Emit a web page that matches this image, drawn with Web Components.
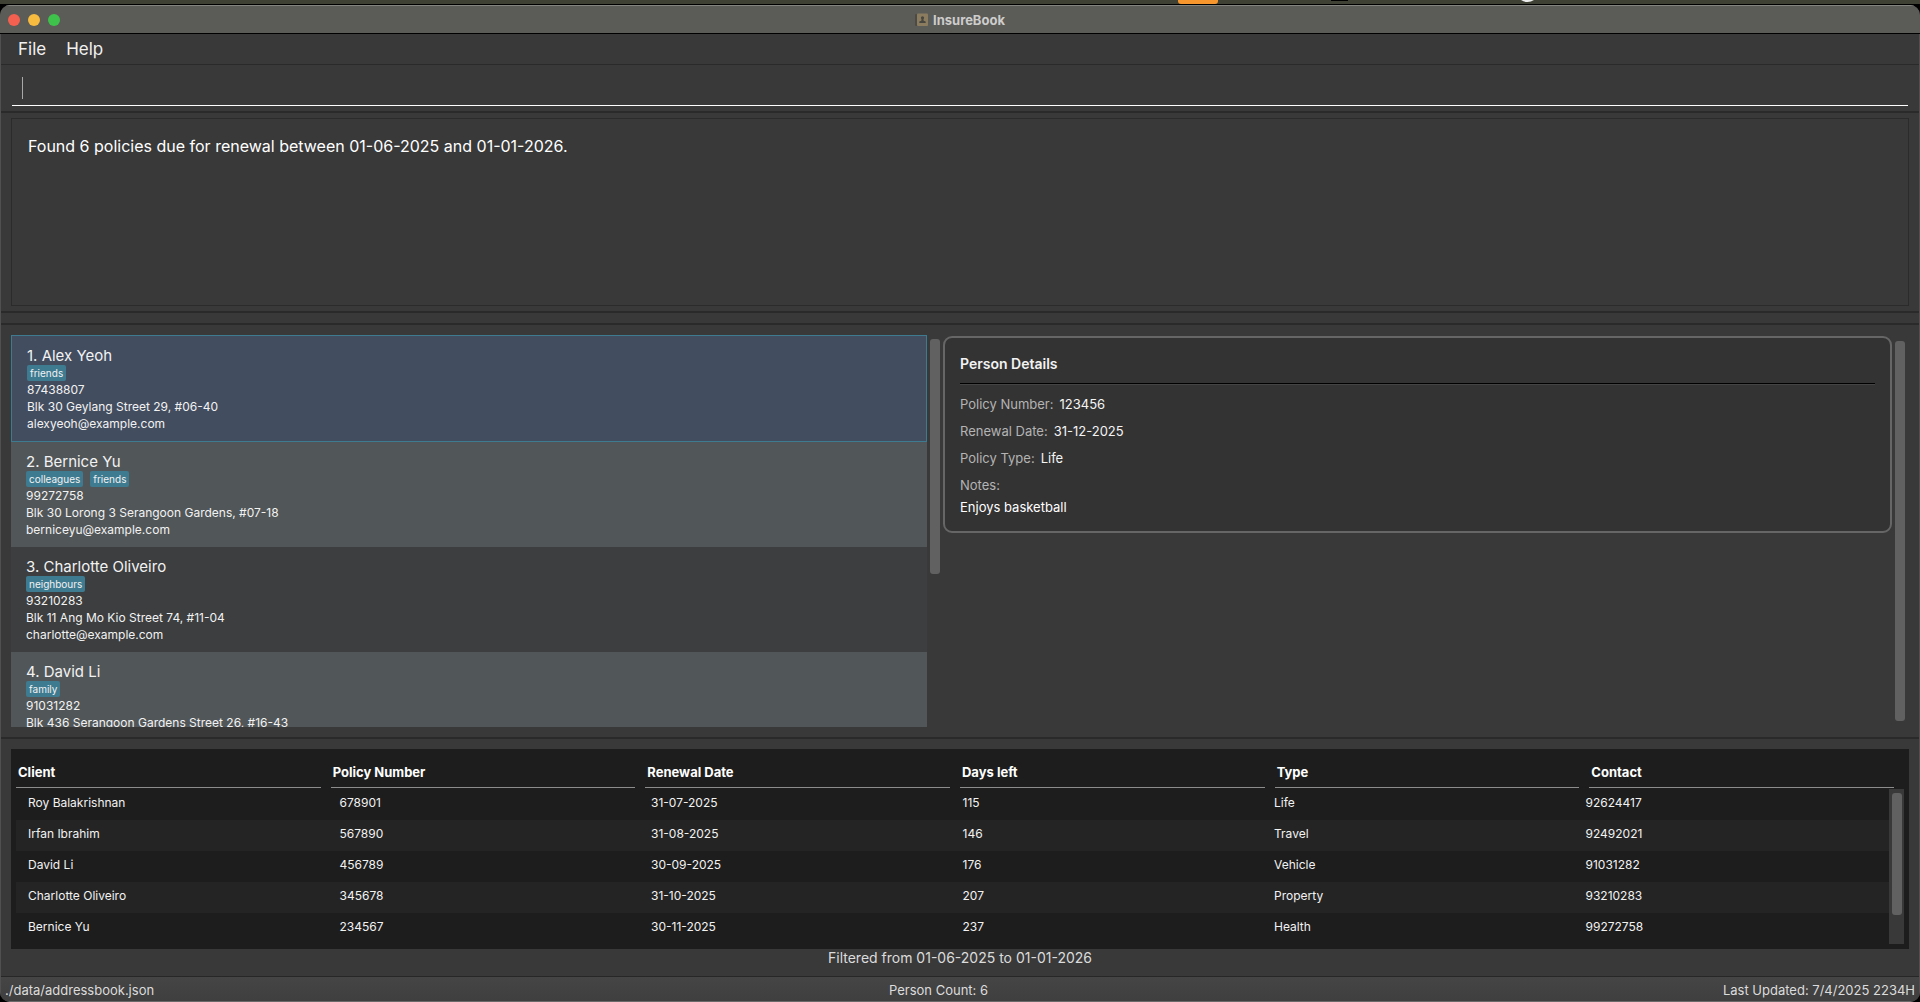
<!DOCTYPE html>
<html lang="en">
<head>
<meta charset="utf-8">
<title>InsureBook</title>
<style>
  html, body { height: 100%; margin: 0; }
  body {
    background: #000;
    color: #fff;
    font-family: Inter, "Noto Sans", sans-serif;
    overflow: hidden;
  }
</style>
</head>
<body>
<insure-app></insure-app>

<script>
const define = (name, html, setup) => {
  const template = document.createElement('template');
  template.innerHTML = html;
  customElements.define(name, class extends HTMLElement {
    constructor() {
      super();
      this.attachShadow({ mode: 'open' }).append(template.content.cloneNode(true));
    }
    connectedCallback() { if (setup) setup(this.shadowRoot, this); }
  });
};

define('desktop-strip', `
  <style>
    :host { display: block; height: 4px; background: #3e4133; }
    svg { display: block; width: 100%; height: 4px; }
  </style>
  <svg viewBox="0 0 1920 4" preserveAspectRatio="none" aria-hidden="true">
    <path d="M1178 0h40v1q0 3-3 3h-34q-3 0-3-3z" fill="#f7962c"/>
    <path d="M1331 0h17v1h-17z" fill="#000"/>
    <path d="M1521 0h13q-3 2-6.500 2t-6.500-2z" fill="#eee"/>
  </svg>`);

define('title-bar', `
  <style>
    :host {
      display: grid; grid-template-columns: 1fr auto 1fr; align-items: center;
      height: 27px; padding: 0 8px; flex: none;
      background: #5b5b58; border-top: 1px solid #83837f; border-bottom: 1px solid #000;
      color: #cdcdcb;
    }
    .lights { display: flex; gap: 8px; }
    button { width: 12px; height: 12px; padding: 0; border: 0; border-radius: 50%; }
    .close { background: #f4604f; }
    .min { background: #f7bb40; }
    .max { background: #3fc24b; }
    h1 { display: flex; align-items: center; gap: 5px; margin: 0; font-size: 13px; line-height: 16px; font-weight: 700; }
    svg { width: 13px; height: 14px; }
  </style>
  <div class="lights">
    <button class="close" aria-label="Close"></button>
    <button class="min" aria-label="Minimize"></button>
    <button class="max" aria-label="Zoom"></button>
  </div>
  <h1>
    <svg viewBox="0 0 13 14" aria-hidden="true">
      <rect x="0" y="1" width="3" height="12" rx="1" fill="#4b4a45"/>
      <rect x="2" y="0.500" width="11" height="12.500" rx="1" fill="#8b7c5f"/>
      <circle cx="7.500" cy="4.800" r="1.600" fill="#484640"/>
      <path d="M6.700 5.500h1.600l.4 2.300 2 .6v1.600H4.300V8.400l2-.6z" fill="#484640"/>
    </svg>
    <span><slot></slot></span>
  </h1>`);

define('menu-bar', `
  <style>
    :host { display: flex; align-items: center; gap: 20px; height: 30px; padding: 0 17px; border-bottom: 1px solid #2a2a2a; flex: none; }
    button { background: none; border: 0; padding: 0; color: #f0f0f0; font: 400 17px/24px Inter, "Noto Sans", sans-serif; }
  </style>
  <button>File</button><button>Help</button>`);

define('command-box', `
  <style>
    :host { display: block; padding: 5px 11px; border-bottom: 2px solid #2a2a2a; flex: none; }
    .field { display: flex; align-items: center; height: 35px; padding: 0 10px; border-bottom: 1px solid #fff; }
    .caret { width: 1px; height: 22px; background: #a8a8a8; }
    input { flex: 1; min-width: 0; border: 0; padding: 0; background: none; outline: 0; color: #fff; font: 17px/22px Inter, sans-serif; }
  </style>
  <div class="field"><span class="caret"></span><input type="text" aria-label="Command"></div>`);

define('result-display', `
  <style>
    :host { display: block; padding: 5px 10px; border-bottom: 2px solid #2a2a2a; flex: none; }
    .box { box-sizing: border-box; height: 188px; padding: 15px 16px; border: 1px solid #2b2b2b; font-size: 16px; line-height: 24px; }
  </style>
  <div class="box" role="status"><slot></slot></div>`);

define('person-card', `
  <style>
    :host { display: block; padding: 11px 15px 9px; background: #515658; color: #f2f2f2; font-size: 12px; line-height: 17px; }
    :host(:nth-child(odd)) { background: #3c3e3f; }
    :host([selected]) { background: #424d5f; border: 1px solid #3e7b91; }
    .name { font-size: 15px; line-height: 18px; }
    .tags { display: flex; gap: 7px; height: 16px; }
    .tag { padding: 0 3px; border-radius: 2px; background: #3e7b91; font-size: 10px; line-height: 16px; }
  </style>
  <div class="name"></div>
  <div class="tags"></div>
  <div class="phone"></div>
  <div class="address"></div>
  <div class="email"></div>`,
  (root, host) => {
    for (const key of ['name', 'phone', 'address', 'email'])
      root.querySelector('.' + key).textContent = host.getAttribute('data-' + key);
    root.querySelector('.tags').replaceChildren(...host.dataset.tags.split(',').map(text => {
      const tag = document.createElement('span');
      tag.className = 'tag';
      tag.textContent = text;
      return tag;
    }));
  });

define('scroll-thumb', `
  <style>
    :host { display: block; width: 10px; border-radius: 3px; background: #616161; }
  </style>`);

define('person-list', `
  <style>
    :host { display: flex; gap: 3px; min-height: 0; min-width: 0; }
    .list { flex: 1; min-width: 0; overflow: hidden; }
    scroll-thumb { height: 60%; margin: 4px 0; }
  </style>
  <div class="list"><slot></slot></div>
  <scroll-thumb></scroll-thumb>`);

define('detail-row', `
  <style>
    :host { display: flex; gap: 6px; }
    .label { color: #b4b4b4; }
    .value { color: #f4f4f4; }
  </style>
  <span class="label"><slot name="label"></slot></span><span class="value"><slot></slot></span>`);

define('person-details', `
  <style>
    :host { display: flex; align-items: flex-start; gap: 3px; min-width: 0; }
    section {
      flex: 1; min-width: 0; margin-top: 1px; padding: 17px 15px 15px; border: 2px solid #666; border-radius: 9px;
      background: #333; font-size: 13px; line-height: 17px;
      display: flex; flex-direction: column; gap: 10px;
    }
    h2 { margin: 0; font-size: 14px; line-height: 18px; font-weight: 600; color: #f2f2f2; }
    hr { margin: 0 0 1px; width: 100%; height: 1px; border: 0; background: #000; border-bottom: 1px solid #444; }
    .notes { display: grid; gap: 5px; }
    .notes span { color: #b4b4b4; }
    scroll-thumb { align-self: stretch; margin: 6px 0; }
  </style>
  <section>
    <h2>Person Details</h2>
    <hr>
    <detail-row><span slot="label">Policy Number:</span>123456</detail-row>
    <detail-row><span slot="label">Renewal Date:</span>31-12-2025</detail-row>
    <detail-row><span slot="label">Policy Type:</span>Life</detail-row>
    <div class="notes"><span>Notes:</span><div>Enjoys basketball</div></div>
  </section>
  <scroll-thumb></scroll-thumb>`);

define('renewals-table', `
  <style>
    :host { display: block; flex: none; padding: 10px 10px 0; }
    .panel { padding: 9px 5px 5px; background: #1d1d1d; }
    table { display: grid; grid-template-columns: 1fr 15px; }
    thead { display: block; grid-column: 1 / -1; margin-bottom: 1px; }
    thead tr { display: grid; grid-template-columns: repeat(6, 1fr); gap: 10px; padding-right: 10px; }
    th { padding: 0 2px; text-align: left; font-size: 13px; line-height: 29px; font-weight: 700; border-bottom: 1px solid #8c8c8c; }
    tbody { display: block; height: 155px; overflow: hidden; }
    tbody tr { display: grid; grid-template-columns: repeat(6, 1fr); gap: 20px; padding: 0 12px; }
    tbody tr:nth-child(even) { background: #242424; }
    td { padding: 0 0 3px; font-size: 12px; line-height: 28px; color: #f2f2f2; }
    tfoot { display: block; background: #393939; }
    tfoot tr, tfoot td { display: block; padding: 0; line-height: 0; }
    scroll-thumb { height: 122px; margin: 4px 3px; }
    p { margin: 0; text-align: center; font-size: 14px; line-height: 18px; padding-bottom: 9px; color: #dcdcdc; }
  </style>
  <div class="panel">
    <table>
      <thead><tr><th>Client</th><th>Policy Number</th><th>Renewal Date</th><th>Days left</th><th>Type</th><th>Contact</th></tr></thead>
      <tbody></tbody>
      <tfoot aria-hidden="true"><tr><td><scroll-thumb></scroll-thumb></td></tr></tfoot>
    </table>
  </div>
  <p>Filtered from 01-06-2025 to 01-01-2026</p>`,
  root => {
    const rows = [
      ['Roy Balakrishnan', '678901', '31-07-2025', '115', 'Life', '92624417'],
      ['Irfan Ibrahim', '567890', '31-08-2025', '146', 'Travel', '92492021'],
      ['David Li', '456789', '30-09-2025', '176', 'Vehicle', '91031282'],
      ['Charlotte Oliveiro', '345678', '31-10-2025', '207', 'Property', '93210283'],
      ['Bernice Yu', '234567', '30-11-2025', '237', 'Health', '99272758'],
    ];
    const body = root.querySelector('tbody');
    for (const row of rows) {
      const tr = body.insertRow();
      for (const text of row) tr.insertCell().textContent = text;
    }
  });

define('status-footer', `
  <style>
    :host {
      display: flex; justify-content: space-between; flex: none; height: 24px; padding: 0 4px;
      border-top: 1px solid #272727; border-bottom: 1px solid #6a6a6a;
      background: linear-gradient(#454545, #3f3f3f); color: #dcdcdc;
      font-size: 13px; line-height: 26px;
    }
  </style>
  <span>./data/addressbook.json</span>
  <span>Person Count: 6</span>
  <span>Last Updated: 7/4/2025 2234H</span>`);

define('insure-app', `
  <style>
    :host { display: flex; flex-direction: column; height: 100vh; }
    .window {
      flex: 1; min-height: 0; display: flex; flex-direction: column; margin-top: 1px;
      background: #393939; border-radius: 10px; overflow: hidden;
    }
    .client { flex: 1; min-height: 0; display: flex; flex-direction: column; border: solid #505050; border-width: 0 1px; }
    .gap { flex: none; height: 10px; border-bottom: 2px solid #2a2a2a; }
    main {
      flex: 1; min-height: 0; display: grid; grid-template-columns: 929fr 962fr; grid-template-rows: 100%; gap: 3px;
      padding: 10px 14px 10px 10px; border-bottom: 2px solid #2a2a2a; box-sizing: border-box;
    }
  </style>
  <desktop-strip></desktop-strip>
  <div class="window">
    <title-bar>InsureBook</title-bar>
    <div class="client">
      <menu-bar></menu-bar>
      <command-box></command-box>
      <result-display>Found 6 policies due for renewal between 01-06-2025 and 01-01-2026.</result-display>
      <div class="gap"></div>
      <main>
        <person-list>
          <person-card selected data-name="1. Alex Yeoh" data-tags="friends" data-phone="87438807" data-address="Blk 30 Geylang Street 29, #06-40" data-email="alexyeoh@example.com"></person-card>
          <person-card data-name="2. Bernice Yu" data-tags="colleagues,friends" data-phone="99272758" data-address="Blk 30 Lorong 3 Serangoon Gardens, #07-18" data-email="berniceyu@example.com"></person-card>
          <person-card data-name="3. Charlotte Oliveiro" data-tags="neighbours" data-phone="93210283" data-address="Blk 11 Ang Mo Kio Street 74, #11-04" data-email="charlotte@example.com"></person-card>
          <person-card data-name="4. David Li" data-tags="family" data-phone="91031282" data-address="Blk 436 Serangoon Gardens Street 26, #16-43" data-email="david@example.com"></person-card>
        </person-list>
        <person-details></person-details>
      </main>
      <renewals-table></renewals-table>
      <status-footer></status-footer>
    </div>
  </div>`);
</script>
</body>
</html>
